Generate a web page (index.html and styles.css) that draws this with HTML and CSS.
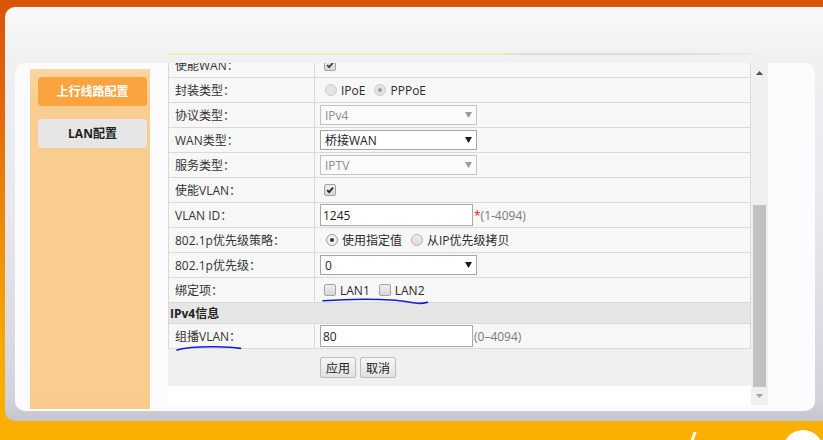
FILE: index.html
```html
<!DOCTYPE html>
<html lang="zh-CN">
<head>
<meta charset="utf-8">
<title>上行线路配置</title>
<link rel="stylesheet" href="styles.css">
</head>
<body>
<div class="frame">
  <div class="topline"></div>
  <div class="card">
    <nav class="sidebar">
      <div class="navbtn active">上行线路配置</div>
      <div class="navbtn">LAN配置</div>
    </nav>
    <div class="iframe">
      <div class="viewport">
        <div class="form">
          <div class="row"><div class="lbl">使能WAN：</div><div class="val"><span class="cb checked dis"><svg viewBox="0 0 12 12"><path d="M2.6 6.2 L5 8.6 L9.6 3.2"/></svg></span></div></div>
          <div class="row"><div class="lbl">封装类型：</div><div class="val"><span class="rd dis first"></span><span class="opt">IPoE</span><span class="rd dis on"></span><span class="opt">PPPoE</span></div></div>
          <div class="row"><div class="lbl">协议类型：</div><div class="val"><div class="sel dis"><span>IPv4</span><svg class="arr" viewBox="0 0 7 6"><path d="M0 0 H7 L3.5 6 Z"/></svg></div></div></div>
          <div class="row"><div class="lbl">WAN类型：</div><div class="val"><div class="sel"><span>桥接WAN</span><svg class="arr" viewBox="0 0 7 6"><path d="M0 0 H7 L3.5 6 Z"/></svg></div></div></div>
          <div class="row"><div class="lbl">服务类型：</div><div class="val"><div class="sel dis"><span>IPTV</span><svg class="arr" viewBox="0 0 7 6"><path d="M0 0 H7 L3.5 6 Z"/></svg></div></div></div>
          <div class="row"><div class="lbl">使能VLAN：</div><div class="val"><span class="cb checked"><svg viewBox="0 0 12 12"><path d="M2.6 6.2 L5 8.6 L9.6 3.2"/></svg></span></div></div>
          <div class="row"><div class="lbl">VLAN ID：</div><div class="val"><div class="inp">1245</div><span class="hint"><span class="req">*</span>(1-4094)</span></div></div>
          <div class="row"><div class="lbl">802.1p优先级策略：</div><div class="val"><span class="rd on first en"></span><span class="opt">使用指定值</span><span class="rd"></span><span class="opt">从IP优先级拷贝</span></div></div>
          <div class="row"><div class="lbl">802.1p优先级：</div><div class="val"><div class="sel"><span>0</span><svg class="arr" viewBox="0 0 7 6"><path d="M0 0 H7 L3.5 6 Z"/></svg></div></div></div>
          <div class="row"><div class="lbl">绑定项：</div><div class="val"><span class="cb first"></span><span class="opt">LAN1</span><span class="cb"></span><span class="opt">LAN2</span></div></div>
          <div class="row head">IPv4信息</div>
          <div class="row"><div class="lbl">组播VLAN：</div><div class="val"><div class="inp">80</div><span class="hint">(0–4094)</span></div></div>
        </div>
        <div class="actions">
          <button class="btn" type="button">应用</button>
          <button class="btn" type="button">取消</button>
        </div>
      </div>
      <div class="scrollbar">
        <div class="sb-up"><svg viewBox="0 0 7 4"><path d="M0 4 L3.5 0 L7 4 Z"/></svg></div>
        <div class="sb-gap"></div>
        <div class="sb-thumb"></div>
        <div class="sb-down"><svg viewBox="0 0 7 4"><path d="M0 0 H7 L3.5 4 Z"/></svg></div>
      </div>
    </div>
  </div>
</div>
<div class="footer">
  <span class="mark"></span>
  <span class="logo"></span>
</div>
<svg class="ink" width="823" height="440" viewBox="0 0 823 440">
  <path d="M323 300.8 C 345 299.2, 372 298.6, 395 300.2 C 408 301.2, 414 303.6, 420 303.4 C 424 303.3, 426 302.6, 427.5 302.2"/>
  <path d="M177 350 C 186 347.6, 200 346.6, 215 346.8 C 227 347, 235 347.6, 240.5 348.4"/>
</svg>
</body>
</html>
```

FILE: styles.css
```css
html, body {
  margin: 0;
  padding: 0;
}

body {
  position: relative;
  width: 823px;
  height: 440px;
  overflow: hidden;
  background: linear-gradient(180deg, #d8540a 0%, #e0640b 20%, #ee8f07 55%, #f8aa02 80%, #fbb000 100%);
  font-family: "Open Sans", "Noto Sans CJK SC", sans-serif;
  font-size: 12px;
  color: #333;
}

.frame {
  box-sizing: border-box;
  width: 818px;
  height: 414px;
  margin: 7px 0 0 5px;
  padding: 46px 0 0 10px;
  border-radius: 10px 0 0 10px;
  background: linear-gradient(180deg, #f9f9f9 0%, #eff0f1 14%, #e8e8ee 50%, #d8d8e0 85%, #d2d2da 95%, #c4c4cc 100%);
}

.topline {
  width: 600px;
  height: 2px;
  margin-left: 153px;
  background: linear-gradient(90deg, #f3e7b4 0%, #f3e7b4 56%, #dadcdd 59%, #dcdedf 88%, rgba(220, 222, 223, 0) 100%);
}

.card {
  display: flex;
  align-items: flex-start;
  width: 800px;
  height: 348px;
  margin-top: 8px;
  border-radius: 10px;
  background: #fcfcfe;
}

.sidebar {
  box-sizing: border-box;
  width: 120px;
  height: 340px;
  margin: 6px 0 0 15px;
  padding: 8px 3px 0 8px;
  background: linear-gradient(180deg, #fbd6a2 0%, #f9cd90 8%, #f9cc8e 100%);
}

.navbtn {
  height: 29px;
  margin-bottom: 13px;
  border-radius: 4px;
  line-height: 29px;
  text-align: center;
  font-weight: bold;
  background: #e6e6e6;
  color: #1e1e1e;
}

.navbtn.active {
  background: #f9a43f;
  color: #fff;
}

.iframe {
  display: flex;
  width: 600px;
  height: 342px;
  margin-left: 18px;
  background: #fff;
}

.viewport {
  width: 583px;
  height: 342px;
  overflow: hidden;
}

.form {
  box-sizing: border-box;
  width: 583px;
  margin-top: -11px;
  border: 1px solid #d9d9d9;
  border-bottom: none;
}

.row {
  box-sizing: border-box;
  display: flex;
  height: 25px;
  border-bottom: 1px solid #d9d9d9;
  background: #f7f7f7;
}

.lbl {
  box-sizing: border-box;
  display: flex;
  align-items: center;
  width: 145px;
  padding-left: 6px;
  white-space: nowrap;
}

.val {
  display: flex;
  flex: 1;
  align-items: center;
  padding-left: 5px;
  border-left: 1px solid #d9d9d9;
  white-space: nowrap;
}

.row.head {
  align-items: center;
  height: 21px;
  padding-left: 1px;
  background: #e6e6e6;
  font-weight: bold;
  color: #222;
}

.sel {
  box-sizing: border-box;
  display: flex;
  align-items: center;
  justify-content: space-between;
  width: 157px;
  height: 20px;
  padding: 0 4px 0 4px;
  border: 1px solid #a6a6a6;
  background: #fff;
  color: #222;
}

.sel.dis {
  border-color: #c4c4c4;
  background: #fbfbfb;
  color: #8c8c8c;
}

.arr {
  width: 7px;
  height: 6px;
  fill: #1a1a1a;
}

.sel.dis .arr {
  fill: #9a9a9a;
}

.inp {
  box-sizing: border-box;
  display: flex;
  align-items: center;
  width: 153px;
  height: 22px;
  padding-left: 2px;
  border: 1px solid #a9a9a9;
  background: #fff;
  color: #222;
}

.hint {
  margin-left: 1px;
  color: #7a7a7a;
}

.req {
  color: #e02020;
}

.cb {
  box-sizing: border-box;
  display: inline-flex;
  width: 12px;
  height: 12px;
  border: 1px solid #a3a3a3;
  border-radius: 2px;
  background: linear-gradient(180deg, #eeeeee, #d8d8d8);
}

.cb svg {
  width: 10px;
  height: 10px;
  fill: none;
  stroke: #2a2a2a;
  stroke-width: 2.2;
}

.cb.dis svg {
  stroke: #444;
}

.val > .cb:first-child {
  margin-left: 4px;
}

.rd {
  box-sizing: border-box;
  position: relative;
  display: inline-block;
  width: 12px;
  height: 12px;
  border: 1px solid #b5b5b5;
  border-radius: 50%;
  background: linear-gradient(180deg, #eeeeee, #dcdcdc);
}

.rd.dis {
  border-color: #cdcdcd;
  background: #e4e4e4;
}

.rd.first {
  margin-left: 5px;
}

.rd.en {
  margin-left: 6px;
  border-color: #9a9a9a;
  background: #f0f0f0;
}

.rd.on::after {
  content: "";
  position: absolute;
  top: 3px;
  left: 3px;
  width: 4px;
  height: 4px;
  border-radius: 50%;
  background: #9a9a9a;
}

.rd.en.on::after {
  background: #333;
}

.opt {
  margin: 0 9px 0 4px;
  color: #2a2a2a;
}

.actions {
  box-sizing: border-box;
  display: flex;
  gap: 4px;
  width: 583px;
  height: 37px;
  padding: 8px 0 0 152px;
  background: #f0f0f0;
}

.btn {
  box-sizing: border-box;
  width: 36px;
  height: 21px;
  padding: 0;
  border: 1px solid #bdbdbd;
  border-radius: 2px;
  background: linear-gradient(180deg, #f6f6f6, #e2e2e2);
  font-family: "Open Sans", "Noto Sans CJK SC", sans-serif;
  font-size: 12px;
  color: #222;
}

.scrollbar {
  display: flex;
  flex-direction: column;
  width: 17px;
  height: 342px;
  background: #f0f0f0;
}

.sb-up {
  display: flex;
  align-items: center;
  justify-content: center;
  height: 20px;
}

.sb-up svg {
  width: 7px;
  height: 4px;
  fill: #505050;
}

.sb-gap {
  height: 122px;
}

.sb-thumb {
  height: 182px;
  margin: 0 2px;
  background: #c1c1c1;
}

.sb-down {
  display: flex;
  align-items: center;
  justify-content: center;
  height: 18px;
}

.sb-down svg {
  width: 7px;
  height: 4px;
  fill: #a3a3a3;
}

.footer {
  display: flex;
  align-items: flex-start;
  justify-content: flex-end;
  height: 19px;
  overflow: hidden;
}

.mark {
  width: 3px;
  height: 9px;
  margin: 11px 88px 0 0;
  background: #fff;
  transform: skewX(-20deg);
}

.logo {
  flex: none;
  width: 40px;
  height: 40px;
  margin-top: 9px;
  border-radius: 50% 50% 0 0;
  background: #fff;
}

.ink {
  position: absolute;
  top: 0;
  left: 0;
  pointer-events: none;
  fill: none;
  stroke: #1a1ad8;
  stroke-width: 1.6;
  stroke-linecap: round;
}
```
